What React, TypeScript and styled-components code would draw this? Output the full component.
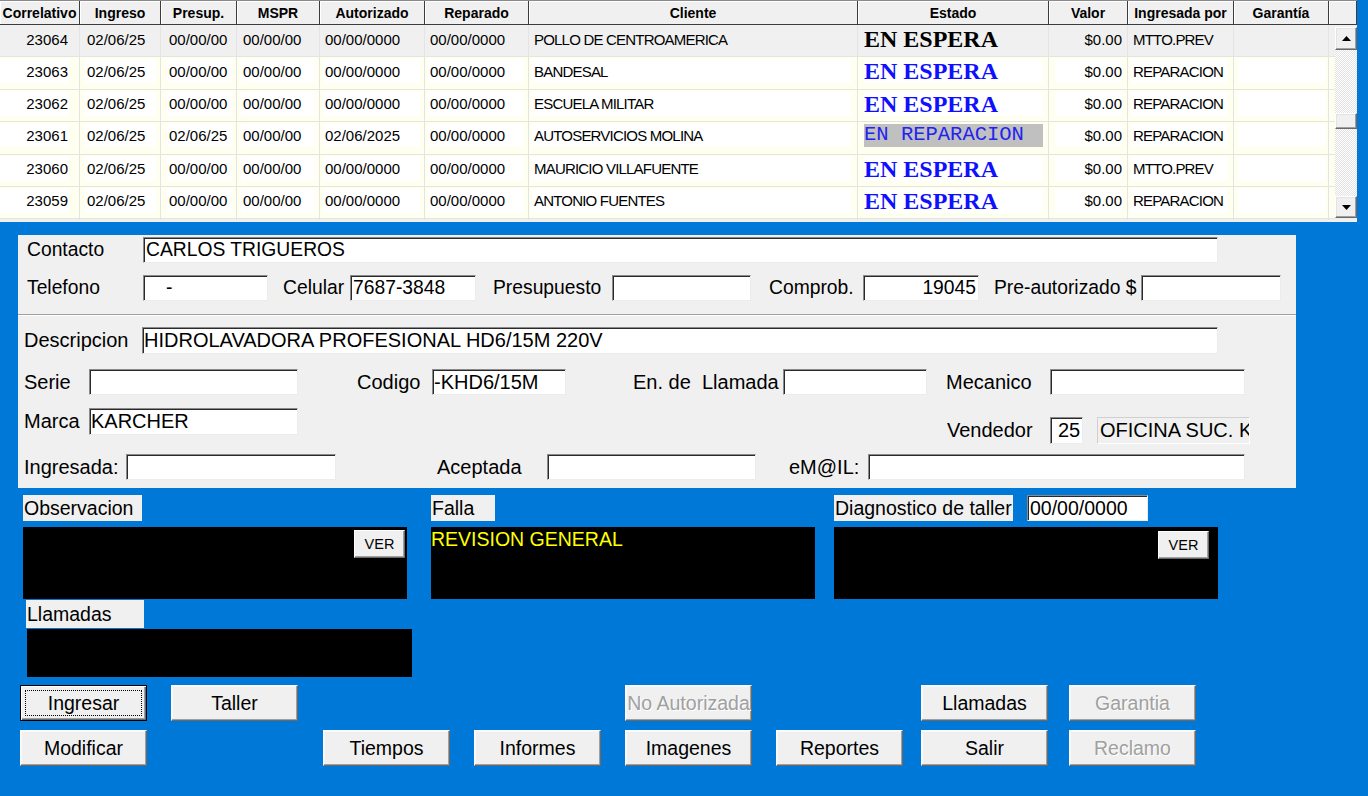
import React from 'react';
import styled, { createGlobalStyle } from 'styled-components';

const SANS = `"Liberation Sans", Arial, sans-serif`;
const SERIF = `"Liberation Serif", "Times New Roman", serif`;
const MONO = `"Liberation Mono", "Courier New", monospace`;

const GlobalStyle = createGlobalStyle`
  html, body { margin: 0; padding: 0; }
  body { background: #0078d7; font-family: ${SANS}; color: #000; overflow: hidden; }
`;

type ColDef = { title: string; w: number; align?: 'right'; ml: number; mr: number; pad?: number; ls?: number };

const COLS: ColDef[] = [
  { title: 'Correlativo', w: 80, align: 'right', ml: 0, mr: 10, pad: 1 },
  { title: 'Ingreso', w: 81, ml: 5, mr: 4 },
  { title: 'Presup.', w: 76, ml: 6, mr: 4 },
  { title: 'MSPR', w: 83, ml: 4, mr: 4 },
  { title: 'Autorizado', w: 105, ml: 3, mr: 4 },
  { title: 'Reparado', w: 104, ml: 3, mr: 4 },
  { title: 'Cliente', w: 329, ml: 3, mr: 6, ls: -0.8 },
  { title: 'Estado', w: 191, ml: 6, mr: 5, pad: 0 },
  { title: 'Valor', w: 79, align: 'right', ml: 6, mr: 5, pad: 0 },
  { title: 'Ingresada por', w: 106, ml: 3, mr: 5, ls: -0.8 },
  { title: 'Garantía', w: 95, ml: 4, mr: 2 },
];
const colTemplate = COLS.map((c) => `${c.w}px`).join(' ');

type RowData = {
  id: string; ing: string; pre: string; mspr: string; aut: string; rep: string;
  cli: string; est: 'ESPERA' | 'REPARACION'; val: string; por: string; sel?: boolean;
};

const ROWS: RowData[] = [
  { id: '23064', ing: '02/06/25', pre: '00/00/00', mspr: '00/00/00', aut: '00/00/0000', rep: '00/00/0000', cli: 'POLLO DE CENTROAMERICA', est: 'ESPERA', val: '$0.00', por: 'MTTO.PREV', sel: true },
  { id: '23063', ing: '02/06/25', pre: '00/00/00', mspr: '00/00/00', aut: '00/00/0000', rep: '00/00/0000', cli: 'BANDESAL', est: 'ESPERA', val: '$0.00', por: 'REPARACION' },
  { id: '23062', ing: '02/06/25', pre: '00/00/00', mspr: '00/00/00', aut: '00/00/0000', rep: '00/00/0000', cli: 'ESCUELA MILITAR', est: 'ESPERA', val: '$0.00', por: 'REPARACION' },
  { id: '23061', ing: '02/06/25', pre: '02/06/25', mspr: '00/00/00', aut: '02/06/2025', rep: '00/00/0000', cli: 'AUTOSERVICIOS MOLINA', est: 'REPARACION', val: '$0.00', por: 'REPARACION' },
  { id: '23060', ing: '02/06/25', pre: '00/00/00', mspr: '00/00/00', aut: '00/00/0000', rep: '00/00/0000', cli: 'MAURICIO VILLAFUENTE', est: 'ESPERA', val: '$0.00', por: 'MTTO.PREV' },
  { id: '23059', ing: '02/06/25', pre: '00/00/00', mspr: '00/00/00', aut: '00/00/0000', rep: '00/00/0000', cli: 'ANTONIO FUENTES', est: 'ESPERA', val: '$0.00', por: 'REPARACION' },
];

/* ---------- Page ---------- */
const Page = styled.div`
  width: 1368px;
  height: 796px;
  background: #0078d7;
  display: flex;
  flex-direction: column;
`;

/* ---------- Table ---------- */
const Table = styled.div`
  width: 1357px;
  background: #f0f0f0;
  display: flex;
  flex-direction: column;
  padding-bottom: 3px;
`;

const HeaderRow = styled.div`
  display: grid;
  grid-template-columns: ${colTemplate} 28px;
  height: 25px;
  box-sizing: border-box;
  border-top: 1px solid #8a8a8a;
`;

const HeaderCell = styled.div`
  display: flex;
  align-items: center;
  justify-content: center;
  font: bold 14px ${SANS};
  color: #000;
  background: #f0f0f0;
  border-right: 1px solid #3c3c3c;
  border-bottom: 1px solid #3c3c3c;
  box-shadow: inset 1px 1px 0 #ffffff;
  white-space: nowrap;
  overflow: hidden;
  box-sizing: border-box;
`;

const Body = styled.div`
  display: flex;
`;

const Rows = styled.div`
  width: 1335px;
  display: flex;
  flex-direction: column;
`;

const Row = styled.div<{ $sel?: boolean }>`
  display: grid;
  grid-template-columns: ${colTemplate} 6px;
  height: 32.4px;
  box-sizing: border-box;
  border-bottom: 1px solid #e4e4e4;
  background: ${(p) => (p.$sel ? '#f0f0f0' : '#fffff0')};
`;

const Cell = styled.div<{ $ml: number; $mr: number }>`
  display: flex;
  min-width: 0;
  box-sizing: border-box;
  border-right: 1px solid #e4e4e4;
  padding: 2px ${(p) => p.$mr}px 7px ${(p) => p.$ml}px;
`;

const Box = styled.div<{ $right?: boolean; $pad: number; $bg: string; $ls: number }>`
  flex: 1;
  min-width: 0;
  display: flex;
  align-items: center;
  justify-content: ${(p) => (p.$right ? 'flex-end' : 'flex-start')};
  padding: 0 ${(p) => p.$pad}px;
  background: ${(p) => p.$bg};
  font: 15px ${SANS};
  letter-spacing: ${(p) => p.$ls}px;
  color: #000;
  white-space: nowrap;
  overflow: hidden;
`;

const Espera = styled.span<{ $sel?: boolean }>`
  font: bold 24px ${SERIF};
  letter-spacing: 0;
  color: ${(p) => (p.$sel ? '#000000' : '#1010ff')};
  line-height: 1;
`;

const Reparacion = styled.span`
  font: 20.5px ${MONO};
  letter-spacing: 0;
  color: #2323f0;
  line-height: 1;
`;

const ScrollBar = styled.div`
  width: 22px;
  margin-top: 2px;
  height: 191px;
  display: flex;
  flex-direction: column;
  background: repeating-conic-gradient(#e2e2e2 0 25%, #ffffff 0 50%) 0 0 / 2px 2px;
`;

const ScrollBtn = styled.div<{ $h: number; $mt?: number }>`
  height: ${(p) => p.$h}px;
  margin-top: ${(p) => p.$mt ?? 0}px;
  box-sizing: border-box;
  background: #f0f0f0;
  border: 1px solid;
  border-color: #ffffff #696969 #696969 #ffffff;
  box-shadow: inset -1px -1px 0 #a0a0a0, inset 1px 1px 0 #e3e3e3;
  display: flex;
  align-items: center;
  justify-content: center;
`;

const Spacer = styled.div`
  flex: 1;
`;

/* ---------- Panel ---------- */
const Panel = styled.div`
  margin: 13px 0 0 18px;
  width: 1278px;
  height: 253px;
  background: #f0f0f0;
  display: flex;
  flex-direction: column;
  box-sizing: border-box;
`;

const FormRow = styled.div<{ $h: number; $mt: number; $pl: number; $top?: boolean }>`
  display: flex;
  align-items: ${(p) => (p.$top ? 'flex-start' : 'center')};
  height: ${(p) => p.$h}px;
  margin-top: ${(p) => p.$mt}px;
  padding-left: ${(p) => p.$pl}px;
  flex-shrink: 0;
`;

const Label = styled.div<{ $w: number; $ml?: number; $fs: number; $mt?: number }>`
  width: ${(p) => p.$w}px;
  margin-left: ${(p) => p.$ml ?? 0}px;
  margin-top: ${(p) => p.$mt ?? 0}px;
  font: ${(p) => p.$fs}px ${SANS};
  color: #000;
  white-space: pre;
  flex-shrink: 0;
`;

const Input = styled.div<{ $w: number; $h: number; $right?: boolean; $fs: number; $pl?: number; $gray?: boolean; $ml?: number }>`
  width: ${(p) => p.$w}px;
  height: ${(p) => p.$h}px;
  margin-left: ${(p) => p.$ml ?? 0}px;
  flex-shrink: 0;
  box-sizing: border-box;
  background: ${(p) => (p.$gray ? '#f0f0f0' : '#ffffff')};
  border: 1px solid;
  border-color: ${(p) => (p.$gray ? '#d0d0d0 #ffffff #ffffff #d0d0d0' : '#8a8a8a #ececec #ececec #8a8a8a')};
  box-shadow: ${(p) => (p.$gray ? 'none' : 'inset 1px 1px 0 #2a2a2a')};
  display: flex;
  align-items: center;
  justify-content: ${(p) => (p.$right ? 'flex-end' : 'flex-start')};
  padding: 0 2px 0 ${(p) => p.$pl ?? 2}px;
  font: ${(p) => p.$fs}px ${SANS};
  color: #000;
  white-space: pre;
  overflow: hidden;
`;

const Separator = styled.div`
  margin-top: 13px;
  height: 2px;
  box-sizing: border-box;
  border-top: 1px solid #a0a0a0;
  border-bottom: 1px solid #ffffff;
  flex-shrink: 0;
`;

const Group = styled.div<{ $ml: number; $mt: number }>`
  display: flex;
  align-items: center;
  margin-left: ${(p) => p.$ml}px;
  margin-top: ${(p) => p.$mt}px;
`;

/* ---------- Notes ---------- */
const Notes = styled.div`
  margin: 7px 0 0 23px;
  display: grid;
  grid-template-columns: 408px 403px 384px;
`;

const NoteCol = styled.div`
  display: flex;
  flex-direction: column;
  gap: 6px;
`;

const NoteHead = styled.div`
  display: flex;
  align-items: center;
  gap: 14px;
`;

const NoteLabel = styled.div<{ $w: number; $h: number }>`
  width: ${(p) => p.$w}px;
  height: ${(p) => p.$h}px;
  background: #f0f0f0;
  display: flex;
  align-items: center;
  padding-left: 1px;
  box-sizing: border-box;
  font: 19.5px ${SANS};
  color: #000;
`;

const BlackBox = styled.div<{ $w: number; $h: number; $pt?: number; $pr?: number }>`
  width: ${(p) => p.$w}px;
  height: ${(p) => p.$h}px;
  background: #000;
  box-sizing: border-box;
  display: flex;
  justify-content: flex-end;
  align-items: flex-start;
  padding: ${(p) => p.$pt ?? 0}px ${(p) => p.$pr ?? 0}px 0 0;
`;

const YellowText = styled.div`
  width: 100%;
  font: 19.5px ${SANS};
  color: #ffff00;
  line-height: 22px;
  padding-top: 1px;
`;

const LlamadasBlock = styled.div`
  margin: 1px 0 0 26px;
  display: flex;
  flex-direction: column;
  gap: 1px;
`;

const LlamadasBox = styled.div`
  margin-left: 1px;
  width: 385px;
  height: 48px;
  background: #000;
`;

const SmallBtn = styled.div`
  width: 51px;
  height: 28px;
  box-sizing: border-box;
  background: #f0f0f0;
  border: 1px solid;
  border-color: #ffffff #696969 #696969 #ffffff;
  box-shadow: inset -1px -1px 0 #a0a0a0;
  display: flex;
  align-items: center;
  justify-content: center;
  font: 14.5px ${SANS};
  color: #000;
`;

/* ---------- Buttons ---------- */
const Buttons = styled.div`
  margin: 8px 0 0 20px;
  display: grid;
  grid-template-columns: 151px 152px 151px 151px 151px 145px 148px 127px;
  grid-template-rows: 36px 36px;
  row-gap: 9px;
`;

const Btn = styled.div<{ $col: number; $row: number; $off?: boolean; $def?: boolean }>`
  grid-column: ${(p) => p.$col};
  grid-row: ${(p) => p.$row};
  width: 127px;
  height: 36px;
  box-sizing: border-box;
  background: #f0f0f0;
  border: 1px solid;
  border-color: ${(p) => (p.$def ? '#000000' : '#ffffff #696969 #696969 #ffffff')};
  box-shadow: ${(p) =>
    p.$def
      ? 'inset 1px 1px 0 #ffffff, inset -1px -1px 0 #696969, inset -2px -2px 0 #a0a0a0'
      : 'inset -1px -1px 0 #a0a0a0, inset 1px 1px 0 #f8f8f8'};
  display: flex;
  align-items: center;
  justify-content: center;
  font: 19.5px ${SANS};
  color: ${(p) => (p.$off ? '#a0a0a0' : '#000')};
  text-shadow: ${(p) => (p.$off ? '1px 1px 0 #ffffff' : 'none')};
  white-space: nowrap;
`;

const Focus = styled.div`
  width: calc(100% - 8px);
  height: calc(100% - 8px);
  box-sizing: border-box;
  border: 1px dotted #000;
  display: flex;
  align-items: center;
  justify-content: center;
`;

const Arrow = ({ up }: { up?: boolean }) => (
  <svg width="9" height="5" viewBox="0 0 9 5">
    <polygon points={up ? '0,5 9,5 4.5,0' : '0,0 9,0 4.5,5'} fill="#000" />
  </svg>
);

const rowValues = (r: RowData) => [r.id, r.ing, r.pre, r.mspr, r.aut, r.rep, r.cli, '', r.val, r.por, ''];

export default function App() {
  return (
    <Page>
      <GlobalStyle />
      <Table>
        <HeaderRow>
          {COLS.map((c) => (
            <HeaderCell key={c.title}>{c.title}</HeaderCell>
          ))}
          <HeaderCell />
        </HeaderRow>
        <Body>
          <Rows>
            {ROWS.map((r) => (
              <Row key={r.id} $sel={r.sel}>
                {rowValues(r).map((v, i) => {
                  const c = COLS[i];
                  const isEstado = i === 7;
                  const bg = r.sel ? '#f0f0f0' : isEstado && r.est === 'REPARACION' ? '#c0c0c0' : '#ffffff';
                  return (
                    <Cell key={i} $ml={c.ml} $mr={c.mr}>
                      <Box $right={c.align === 'right'} $pad={c.pad ?? 2} $bg={bg} $ls={c.ls ?? 0}>
                        {isEstado ? (
                          r.est === 'ESPERA' ? (
                            <Espera $sel={r.sel}>EN ESPERA</Espera>
                          ) : (
                            <Reparacion>EN REPARACION</Reparacion>
                          )
                        ) : (
                          v
                        )}
                      </Box>
                    </Cell>
                  );
                })}
                <div />
              </Row>
            ))}
          </Rows>
          <ScrollBar>
            <ScrollBtn $h={23}>
              <Arrow up />
            </ScrollBtn>
            <ScrollBtn $h={16} $mt={63} />
            <Spacer />
            <ScrollBtn $h={22}>
              <Arrow />
            </ScrollBtn>
          </ScrollBar>
        </Body>
      </Table>

      <Panel>
        <FormRow $h={26} $mt={2} $pl={9}>
          <Label $w={116} $fs={19.3}>Contacto</Label>
          <Input $w={1075} $h={26} $fs={19.3}>CARLOS TRIGUEROS</Input>
        </FormRow>
        <FormRow $h={26} $mt={12} $pl={9}>
          <Label $w={116} $fs={19.3}>Telefono</Label>
          <Input $w={125} $h={26} $fs={19.3} $pl={22}>-</Input>
          <Label $w={67} $ml={15} $fs={19.3}>Celular</Label>
          <Input $w={126} $h={26} $fs={19.3}>7687-3848</Input>
          <Label $w={119} $ml={17} $fs={19.3}>Presupuesto</Label>
          <Input $w={139} $h={26} $fs={19.3} />
          <Label $w={94} $ml={18} $fs={19.3}>Comprob.</Label>
          <Input $w={116} $h={26} $fs={19.3} $right>19045</Input>
          <Label $w={147} $ml={15} $fs={19.3}>Pre-autorizado $</Label>
          <Input $w={140} $h={26} $fs={19.3} />
        </FormRow>
        <Separator />
        <FormRow $h={27} $mt={11} $pl={6}>
          <Label $w={118} $fs={20}>Descripcion</Label>
          <Input $w={1076} $h={27} $fs={20} $pl={1}>HIDROLAVADORA PROFESIONAL HD6/15M 220V</Input>
        </FormRow>
        <FormRow $h={26} $mt={15} $pl={6}>
          <Label $w={65} $fs={20}>Serie</Label>
          <Input $w={209} $h={26} $fs={20} />
          <Label $w={75} $ml={59} $fs={20}>Codigo</Label>
          <Input $w={134} $h={26} $fs={20} $pl={1}>-KHD6/15M</Input>
          <Label $w={150} $ml={67} $fs={20}>{'En. de  Llamada'}</Label>
          <Input $w={144} $h={26} $fs={20} />
          <Label $w={104} $ml={19} $fs={20}>Mecanico</Label>
          <Input $w={195} $h={26} $fs={20} />
        </FormRow>
        <FormRow $h={36} $mt={13} $pl={6} $top>
          <Group $ml={0} $mt={0}>
            <Label $w={65} $fs={20}>Marca</Label>
            <Input $w={209} $h={27} $fs={20} $pl={1}>KARCHER</Input>
          </Group>
          <Group $ml={649} $mt={9}>
            <Label $w={103} $fs={20}>Vendedor</Label>
            <Input $w={33} $h={27} $fs={20} $pl={7}>25</Input>
            <Input $w={153} $h={27} $fs={20} $gray $ml={14}>OFICINA SUC. KARCHER</Input>
          </Group>
        </FormRow>
        <FormRow $h={26} $mt={10} $pl={6}>
          <Label $w={102} $fs={20}>Ingresada:</Label>
          <Input $w={210} $h={26} $fs={20} />
          <Label $w={110} $ml={101} $fs={20}>Aceptada</Label>
          <Input $w={209} $h={26} $fs={20} />
          <Label $w={79} $ml={33} $fs={20}>eM@IL:</Label>
          <Input $w={377} $h={26} $fs={20} />
        </FormRow>
      </Panel>

      <Notes>
        <NoteCol>
          <NoteLabel $w={119} $h={26}>Observacion</NoteLabel>
          <BlackBox $w={384} $h={72} $pt={3} $pr={2}>
            <SmallBtn>VER</SmallBtn>
          </BlackBox>
        </NoteCol>
        <NoteCol>
          <NoteLabel $w={64} $h={26}>Falla</NoteLabel>
          <BlackBox $w={384} $h={72}>
            <YellowText>REVISION GENERAL</YellowText>
          </BlackBox>
        </NoteCol>
        <NoteCol>
          <NoteHead>
            <NoteLabel $w={179} $h={26}>Diagnostico de taller</NoteLabel>
            <Input $w={121} $h={26} $fs={19.5}>00/00/0000</Input>
          </NoteHead>
          <BlackBox $w={384} $h={72} $pt={4} $pr={9}>
            <SmallBtn>VER</SmallBtn>
          </BlackBox>
        </NoteCol>
      </Notes>
      <LlamadasBlock>
        <NoteLabel $w={118} $h={28}>Llamadas</NoteLabel>
        <LlamadasBox />
      </LlamadasBlock>

      <Buttons>
        <Btn $col={1} $row={1} $def>
          <Focus>Ingresar</Focus>
        </Btn>
        <Btn $col={2} $row={1}>Taller</Btn>
        <Btn $col={5} $row={1} $off>No Autorizada</Btn>
        <Btn $col={7} $row={1}>Llamadas</Btn>
        <Btn $col={8} $row={1} $off>Garantia</Btn>
        <Btn $col={1} $row={2}>Modificar</Btn>
        <Btn $col={3} $row={2}>Tiempos</Btn>
        <Btn $col={4} $row={2}>Informes</Btn>
        <Btn $col={5} $row={2}>Imagenes</Btn>
        <Btn $col={6} $row={2}>Reportes</Btn>
        <Btn $col={7} $row={2}>Salir</Btn>
        <Btn $col={8} $row={2} $off>Reclamo</Btn>
      </Buttons>
    </Page>
  );
}
